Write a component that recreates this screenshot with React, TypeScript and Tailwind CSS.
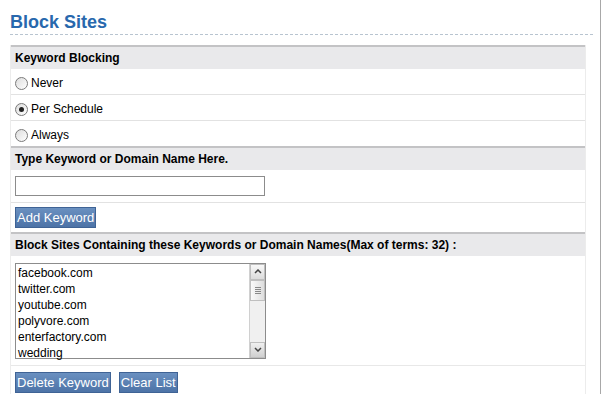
import React from "react";

const Radio = ({ checked }: { checked?: boolean }) => (
  <span className="w-[13px] h-[13px] rounded-full border border-[#7a7a7a] bg-gradient-to-br from-[#dcdcdc] to-white flex items-center justify-center mr-[2px]">
    {checked && <span className="w-[5px] h-[5px] rounded-full bg-[#222]" />}
  </span>
);

const BlueButton = ({ label }: { label: string }) => (
  <button className="h-[21px] px-[1px] bg-gradient-to-b from-[#6a90c0] to-[#4d73a7] border border-[#3f6395] text-white text-[13px] leading-none">
    {label}
  </button>
);

const Header = ({ children }: { children: React.ReactNode }) => (
  <div className="h-[24px] border-t-[2px] border-[#c3c3c5] bg-[#e9e9eb] flex items-center px-[4px] font-bold text-[12px] text-black">
    {children}
  </div>
);

const Row = ({ children, className = "" }: { children: React.ReactNode; className?: string }) => (
  <div className={`border-t border-[#e2e2e2] flex items-center px-[4px] text-[12px] text-black ${className}`}>
    {children}
  </div>
);

export default function App() {
  const sites = ["facebook.com", "twitter.com", "youtube.com", "polyvore.com", "enterfactory.com", "wedding"];
  const options = [
    { label: "Never", checked: false },
    { label: "Per Schedule", checked: true },
    { label: "Always", checked: false },
  ];
  return (
    <div className="w-[603px] h-[394px] bg-white overflow-hidden flex font-['Liberation_Sans',Arial,sans-serif]">
      <div className="w-[600px] pl-[10px] pr-[7px]">
        {/* title */}
        <div className="h-[35px] border-b border-dashed border-[#b8c4d0] flex items-end pb-[3px]">
          <h1 className="text-[18px] font-bold text-[#2868ad] leading-none">Block Sites</h1>
        </div>
        <div className="mt-[10px] mr-[7px] border-l border-r border-[#ececec]">
          <Header>Keyword Blocking</Header>
          {options.map((o, i) => (
            <Row key={o.label} className={i === 0 ? "h-[25px] border-t-0 pt-[3px]" : "h-[26px] pt-[3px]"}>
              <Radio checked={o.checked} />
              <span className="ml-[1px]">{o.label}</span>
            </Row>
          ))}
          <Header>Type Keyword or Domain Name Here.</Header>
          <Row className="h-[32px] border-t-0">
            <input className="w-[250px] h-[20px] border border-[#8c8c8c] bg-white outline-none" />
          </Row>
          <Row className="h-[30px]">
            <BlueButton label="Add Keyword" />
          </Row>
          <Header>Block Sites Containing these Keywords or Domain Names(Max of terms: 32) :</Header>
          <Row className="h-[109px] border-t-0">
            <div className="w-[251px] h-[96px] border border-[#8c8c8c] flex">
              <div className="flex-1 pl-[2px] pt-[1px] text-[12px] leading-[16px]">
                {sites.map((s) => (
                  <div key={s}>{s}</div>
                ))}
              </div>
              <div className="w-[16px] bg-[#f0f0f0] border-l border-[#d0d0d0] flex flex-col">
                <div className="h-[16px] border border-[#bfbfbf] bg-gradient-to-b from-[#f8f8f8] to-[#dcdcdc] flex items-center justify-center">
                  <svg width="8" height="5" viewBox="0 0 8 5"><path d="M1 4 L4 1 L7 4" stroke="#444" strokeWidth="1.5" fill="none" /></svg>
                </div>
                <div className="h-[21px] border border-[#bfbfbf] bg-gradient-to-r from-[#fafafa] to-[#dedede] flex flex-col items-center justify-center gap-[1px]">
                  <span className="w-[6px] h-px bg-[#888]" />
                  <span className="w-[6px] h-px bg-[#888]" />
                  <span className="w-[6px] h-px bg-[#888]" />
                  <span className="w-[6px] h-px bg-[#888]" />
                </div>
                <div className="flex-1" />
                <div className="h-[16px] border border-[#bfbfbf] bg-gradient-to-b from-[#f0f0f0] to-[#d0d0d0] flex items-center justify-center">
                  <svg width="8" height="5" viewBox="0 0 8 5"><path d="M1 1 L4 4 L7 1" stroke="#444" strokeWidth="1.5" fill="none" /></svg>
                </div>
              </div>
            </div>
          </Row>
          <Row className="h-[30px] gap-[8px] border-[#e8e8e8] pt-[4px]">
            <BlueButton label="Delete Keyword" />
            <BlueButton label="Clear List" />
          </Row>
        </div>
      </div>
      <div className="w-[3px] border-l border-[#a8a8a8]" />
    </div>
  );
}
